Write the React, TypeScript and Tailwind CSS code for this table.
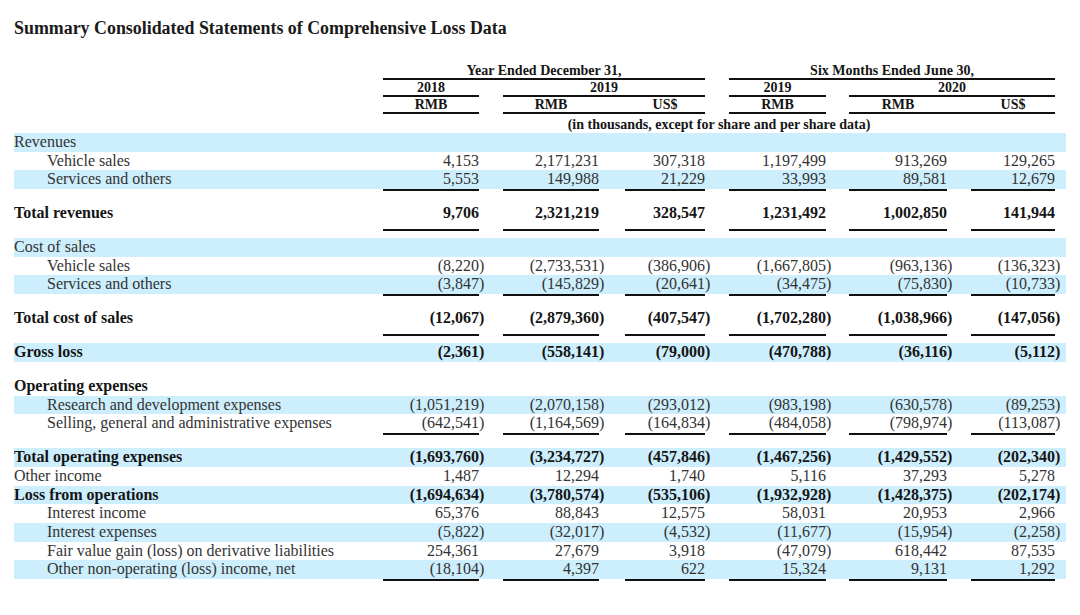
const GRID =
  "grid grid-cols-[369px_96px_24px_96px_26px_80px_24px_97px_23px_98px_24px_84px_16px]";

type Line = {
  label: string;
  values?: string[];
  indent?: boolean;
  bold?: boolean;
  band?: boolean;
  line?: boolean;
  tall?: boolean;
};

type Item = Line | { spacer: string };

const items: Item[] = [
  { label: "Revenues", band: true },
  { label: "Vehicle sales", indent: true, values: ["4,153", "2,171,231", "307,318", "1,197,499", "913,269", "129,265"] },
  { label: "Services and others", indent: true, band: true, line: true, values: ["5,553", "149,988", "21,229", "33,993", "89,581", "12,679"] },
  { spacer: "h-[15.3px]" },
  { label: "Total revenues", bold: true, line: true, tall: true, values: ["9,706", "2,321,219", "328,547", "1,231,492", "1,002,850", "141,944"] },
  { spacer: "h-[7.2px]" },
  { label: "Cost of sales", band: true },
  { label: "Vehicle sales", indent: true, values: ["(8,220)", "(2,733,531)", "(386,906)", "(1,667,805)", "(963,136)", "(136,323)"] },
  { label: "Services and others", indent: true, band: true, line: true, values: ["(3,847)", "(145,829)", "(20,641)", "(34,475)", "(75,830)", "(10,733)"] },
  { spacer: "h-[15.3px]" },
  { label: "Total cost of sales", bold: true, line: true, tall: true, values: ["(12,067)", "(2,879,360)", "(407,547)", "(1,702,280)", "(1,038,966)", "(147,056)"] },
  { spacer: "h-[7.2px]" },
  { label: "Gross loss", bold: true, band: true, values: ["(2,361)", "(558,141)", "(79,000)", "(470,788)", "(36,116)", "(5,112)"] },
  { spacer: "h-[15.4px]" },
  { label: "Operating expenses", bold: true },
  { label: "Research and development expenses", indent: true, band: true, values: ["(1,051,219)", "(2,070,158)", "(293,012)", "(983,198)", "(630,578)", "(89,253)"] },
  { label: "Selling, general and administrative expenses", indent: true, line: true, values: ["(642,541)", "(1,164,569)", "(164,834)", "(484,058)", "(798,974)", "(113,087)"] },
  { spacer: "h-[15.3px]" },
  { label: "Total operating expenses", bold: true, band: true, values: ["(1,693,760)", "(3,234,727)", "(457,846)", "(1,467,256)", "(1,429,552)", "(202,340)"] },
  { label: "Other income", values: ["1,487", "12,294", "1,740", "5,116", "37,293", "5,278"] },
  { label: "Loss from operations", bold: true, band: true, values: ["(1,694,634)", "(3,780,574)", "(535,106)", "(1,932,928)", "(1,428,375)", "(202,174)"] },
  { label: "Interest income", indent: true, values: ["65,376", "88,843", "12,575", "58,031", "20,953", "2,966"] },
  { label: "Interest expenses", indent: true, band: true, values: ["(5,822)", "(32,017)", "(4,532)", "(11,677)", "(15,954)", "(2,258)"] },
  { label: "Fair value gain (loss) on derivative liabilities", indent: true, values: ["254,361", "27,679", "3,918", "(47,079)", "618,442", "87,535"] },
  { label: "Other non-operating (loss) income, net", indent: true, band: true, line: true, values: ["(18,104)", "4,397", "622", "15,324", "9,131", "1,292"] },
];

function Row({ row }: { row: Line }) {
  return (
    <div
      className={`${GRID} ${row.tall ? "h-[26.5px]" : "h-[18.67px]"} leading-[18.67px] ${
        row.band ? "bg-[#cdeefc]" : ""
      } ${row.bold ? "font-bold text-[#151515]" : "text-[#333]"}`}
    >
      <div className={`whitespace-nowrap ${row.indent ? "pl-[33px]" : ""}`}>{row.label}</div>
      {row.values?.map((v, i) => {
        const neg = v.endsWith(")");
        return [
          <div
            key={`v${i}`}
            className={`text-right whitespace-nowrap ${row.line ? "border-b-2 border-[#111]" : ""}`}
          >
            {neg ? v.slice(0, -1) : v}
          </div>,
          <div key={`s${i}`}>{neg ? ")" : ""}</div>,
        ];
      })}
    </div>
  );
}

export default function App() {
  return (
    <div className="w-[1080px] h-[615px] bg-white px-[14px] font-['Liberation_Serif','Times_New_Roman',serif] text-[16px]">
      {/* Title */}
      <div className="pt-[18px] h-[62px]">
        <h1 className="text-[17.9px] leading-[20px] font-bold text-[#1a1a1a]">
          Summary Consolidated Statements of Comprehensive Loss Data
        </h1>
      </div>

      {/* Column headers */}
      <div className="text-[14px] font-bold text-[#151515]">
        <div className={`${GRID} h-[18px] pt-[2px] leading-[14px]`}>
          <div className="col-start-2 col-end-7 border-b-2 border-[#111] text-center">
            Year Ended December 31,
          </div>
          <div className="col-start-8 col-end-13 border-b-2 border-[#111] text-center">
            Six Months Ended June 30,
          </div>
        </div>
        <div className={`${GRID} h-[17px] leading-[15px]`}>
          <div className="col-start-2 col-end-3 border-b-2 border-[#111] text-center">2018</div>
          <div className="col-start-4 col-end-7 border-b-2 border-[#111] text-center">2019</div>
          <div className="col-start-8 col-end-9 border-b-2 border-[#111] text-center">2019</div>
          <div className="col-start-10 col-end-13 border-b-2 border-[#111] text-center">2020</div>
        </div>
        <div className={`${GRID} h-[17px] leading-[15px]`}>
          <div className="col-start-2 col-end-3 border-b-2 border-[#111] text-center">RMB</div>
          <div className="col-start-4 col-end-5 border-b-2 border-[#111] text-center">RMB</div>
          <div className="col-start-5 col-end-6 border-b-2 border-[#111]" />
          <div className="col-start-6 col-end-7 border-b-2 border-[#111] text-center">US$</div>
          <div className="col-start-8 col-end-9 border-b-2 border-[#111] text-center">RMB</div>
          <div className="col-start-10 col-end-11 border-b-2 border-[#111] text-center">RMB</div>
          <div className="col-start-11 col-end-12 border-b-2 border-[#111]" />
          <div className="col-start-12 col-end-13 border-b-2 border-[#111] text-center">US$</div>
        </div>
        <div className={`${GRID} h-[19px] pt-[3px] leading-[15px]`}>
          <div className="col-start-2 col-end-13 text-center whitespace-nowrap">
            (in thousands, except for share and per share data)
          </div>
        </div>
      </div>

      {/* Body */}
      <div>
        {items.map((it, i) =>
          "spacer" in it ? <div key={i} className={it.spacer} /> : <Row key={i} row={it} />
        )}
      </div>
    </div>
  );
}
